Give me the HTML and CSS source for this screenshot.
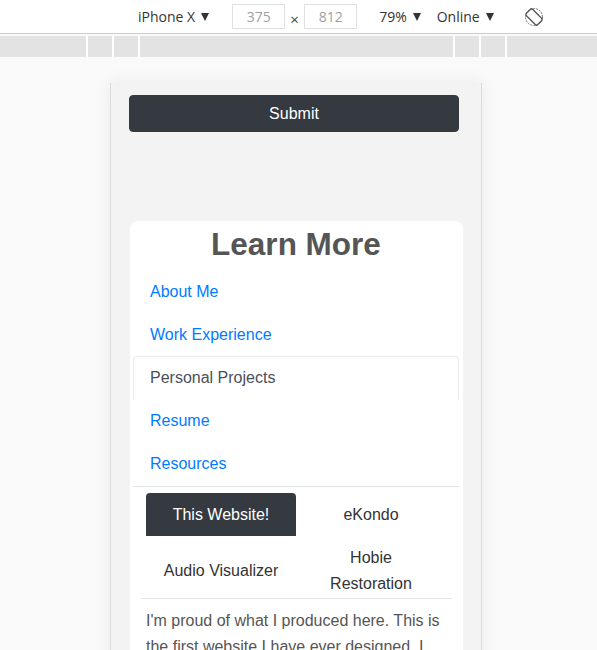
FILE: index.html
```html
<!DOCTYPE html>
<html lang="en">
<head>
<meta charset="utf-8">
<title>Learn More</title>
<link rel="stylesheet" href="styles.css">
</head>
<body>
<div class="toolbar">
  <span class="tool-item device-name">iPhone X<i class="caret"></i></span>
  <span class="dim-box">375</span>
  <span class="times">×</span>
  <span class="dim-box">812</span>
  <span class="tool-item zoom">79%<i class="caret"></i></span>
  <span class="tool-item throttle">Online<i class="caret"></i></span>
  <svg class="rotate" width="20" height="20" viewBox="0 0 20 20" aria-hidden="true">
    <circle cx="10" cy="10" r="8.5" fill="none" stroke="#777" stroke-width="1" stroke-dasharray="2 1"/>
    <rect x="5.5" y="2" width="9" height="16" rx="1.8" fill="none" stroke="#555" stroke-width="1.3" transform="rotate(-45 10 10)"/>
  </svg>
</div>
<div class="ruler">
  <span class="seg s1"></span><span class="seg s2"></span><span class="seg s3"></span><span class="seg s4"></span><span class="seg s5"></span><span class="seg s6"></span><span class="seg s7"></span>
</div>
<div class="viewport">
  <div class="device">
    <button class="submit" type="button">Submit</button>
    <section class="card">
      <h2 class="card-title">Learn More</h2>
      <ul class="nav-tabs">
        <li><a class="nav-link" href="#">About Me</a></li>
        <li><a class="nav-link" href="#">Work Experience</a></li>
        <li><a class="nav-link active" href="#">Personal Projects</a></li>
        <li><a class="nav-link" href="#">Resume</a></li>
        <li><a class="nav-link" href="#">Resources</a></li>
      </ul>
      <div class="pills">
        <button class="pill active" type="button">This Website!</button>
        <button class="pill" type="button">eKondo</button>
        <button class="pill" type="button">Audio Visualizer</button>
        <button class="pill" type="button">Hobie<br>Restoration</button>
      </div>
      <hr class="divider">
      <p class="desc">I'm proud of what I produced here. This is the first website I have ever designed. I learned a great deal about responsive layouts, styling and building something that works on every screen size.</p>
    </section>
  </div>
</div>
</body>
</html>
```
FILE: styles.css
```css
html, body {
  margin: 0;
  padding: 0;
  height: 650px;
  overflow: hidden;
  background: #fafafa;
}

.toolbar {
  height: 33px;
  background: #ffffff;
  border-bottom: 1px solid #cbcbcb;
  display: flex;
  align-items: center;
  padding-left: 138px;
  font-family: "Open Sans", "DejaVu Sans", sans-serif;
  font-size: 14px;
  color: #333;
  box-sizing: content-box;
}

.tool-item {
  display: flex;
  align-items: center;
  white-space: nowrap;
}

.caret {
  display: inline-block;
  width: 0;
  height: 0;
  border-left: 4.5px solid transparent;
  border-right: 4.5px solid transparent;
  border-top: 8px solid #333;
  margin-left: 6px;
}

.device-name { margin-right: 23px; }

.dim-box {
  width: 51px;
  height: 23px;
  border: 1px solid #e0e0e0;
  display: flex;
  align-items: center;
  justify-content: center;
  color: #a0a0a0;
  font-size: 14px;
}

.times {
  width: 19px;
  text-align: center;
  font-size: 15px;
  color: #444;
  padding-top: 5px;
}

.zoom { margin-left: 22px; }
.throttle { margin-left: 16px; }
.rotate { margin-left: 30px; }

.ruler {
  margin-top: 2px;
  height: 21px;
  display: flex;
  gap: 2px;
  background: #ffffff;
}

.seg { background: #e3e3e3; height: 21px; }
.s1 { width: 86px; }
.s2 { width: 24px; }
.s3 { width: 24px; }
.s4 { width: 313px; }
.s5 { width: 24px; }
.s6 { width: 24px; }
.s7 { flex: 1; }

.viewport {
  padding-top: 26px;
  background: #fafafa;
}

.device {
  margin-left: 110px;
  width: 352px;
  height: 700px;
  padding: 12px 0 0 18px;
  background: #f3f3f3;
  border-left: 1px solid #dcdcdc;
  border-right: 1px solid #dcdcdc;
  box-shadow: 0 0 18px rgba(0, 0, 0, 0.07);
  font-family: "Liberation Sans", Arial, sans-serif;
}

.submit {
  display: block;
  width: 330px;
  height: 37px;
  border: 1px solid #343a40;
  border-radius: 4px;
  background: #343a40;
  color: #fff;
  font-family: "Liberation Sans", Arial, sans-serif;
  font-size: 16px;
  padding: 0;
}

.card {
  margin: 89px 0 0 1px;
  width: 326px;
  padding: 4px 4px 0 3px;
  background: #fff;
  border-radius: 8px 8px 0 0;
  min-height: 500px;
}

.card-title {
  margin: 0 0 7px;
  text-align: center;
  font-size: 31.5px;
  line-height: 38px;
  font-weight: bold;
  color: #555;
}

.nav-tabs {
  list-style: none;
  margin: 0;
  padding: 0;
  border-bottom: 1px solid #e2e5e8;
}

.nav-link {
  display: block;
  padding: 8.6px 16px;
  line-height: 24px;
  font-size: 16px;
  color: #007bff;
  text-decoration: none;
  border: 1px solid transparent;
  border-radius: 4px 4px 0 0;
}

.nav-link.active {
  color: #495057;
  border-color: #ececec #ececec transparent;
  background: #fff;
}

.pills {
  margin: 6px 13px 0;
  display: grid;
  grid-template-columns: 150px 150px;
}

.pill {
  border: none;
  background: transparent;
  font-family: "Liberation Sans", Arial, sans-serif;
  font-size: 16px;
  line-height: 26px;
  padding: 9.5px 4px 7.5px;
  color: #333;
  text-align: center;
}

.pill.active {
  background: #343a40;
  color: #fff;
  border-radius: 4px 4px 0 0;
}

.divider {
  margin: -7px 7px 0 8px;
  border: none;
  border-top: 1px solid #e6e6e6;
  height: 0;
}

.desc {
  margin: 9px 0 0 13px;
  width: 300px;
  font-size: 16px;
  line-height: 26px;
  color: #555;
}
```
